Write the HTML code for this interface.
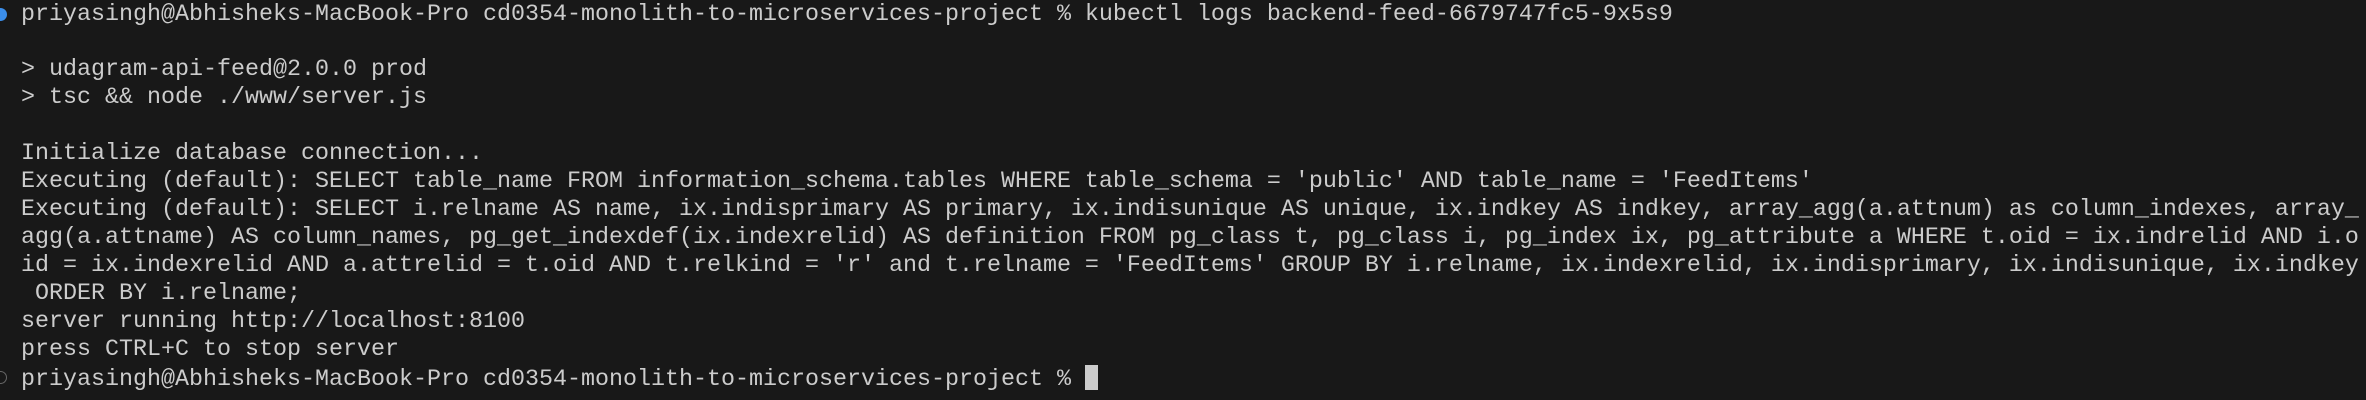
<!DOCTYPE html>
<html><head><meta charset="utf-8"><style>
html,body{margin:0;padding:0;background:#181818;width:2366px;height:400px;overflow:hidden}
pre{margin:0;position:absolute;left:21px;top:1.5px;font-family:"Liberation Mono",monospace;font-size:23.33px;line-height:27.95px;color:#cccccc;white-space:pre}
.dot{position:absolute;left:-6px;width:13px;height:13px;border-radius:50%}
.cur{display:inline-block;width:13px;height:25px;background:#cccccc;vertical-align:-5px}
</style></head><body>
<div class="dot" style="top:8px;background:#3b8eea"></div>
<div class="dot" style="top:371px;border:1.5px solid #666;box-sizing:border-box"></div>
<pre>priyasingh@Abhisheks-MacBook-Pro cd0354-monolith-to-microservices-project % kubectl logs backend-feed-6679747fc5-9x5s9

> udagram-api-feed@2.0.0 prod
> tsc &amp;&amp; node ./www/server.js

Initialize database connection...
Executing (default): SELECT table_name FROM information_schema.tables WHERE table_schema = 'public' AND table_name = 'FeedItems'
Executing (default): SELECT i.relname AS name, ix.indisprimary AS primary, ix.indisunique AS unique, ix.indkey AS indkey, array_agg(a.attnum) as column_indexes, array_
agg(a.attname) AS column_names, pg_get_indexdef(ix.indexrelid) AS definition FROM pg_class t, pg_class i, pg_index ix, pg_attribute a WHERE t.oid = ix.indrelid AND i.o
id = ix.indexrelid AND a.attrelid = t.oid AND t.relkind = 'r' and t.relname = 'FeedItems' GROUP BY i.relname, ix.indexrelid, ix.indisprimary, ix.indisunique, ix.indkey
 ORDER BY i.relname;
server running http://localhost:8100
press CTRL+C to stop server
priyasingh@Abhisheks-MacBook-Pro cd0354-monolith-to-microservices-project % <span class="cur"></span></pre>
</body></html>
